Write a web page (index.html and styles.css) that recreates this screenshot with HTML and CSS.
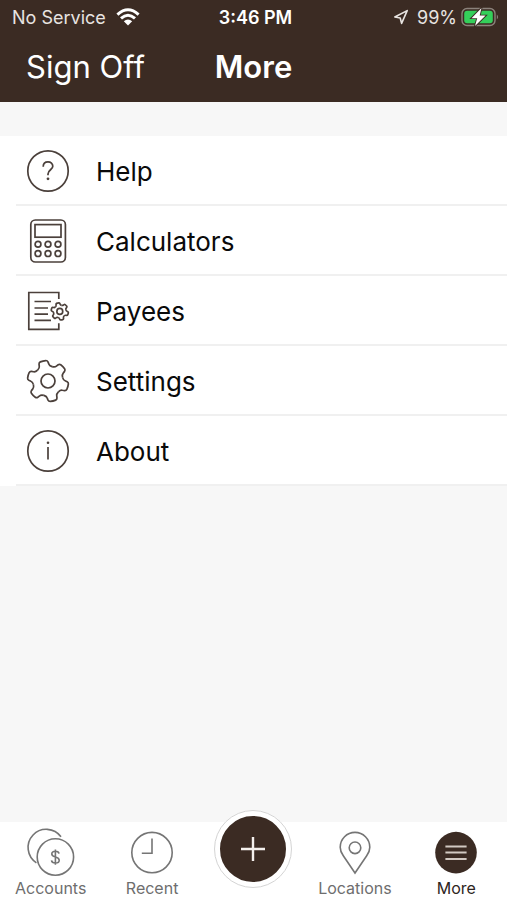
FILE: index.html
```html
<!DOCTYPE html>
<html lang="en">
<head>
<meta charset="utf-8">
<meta name="viewport" content="width=device-width, initial-scale=1">
<title>More</title>
<link rel="stylesheet" href="styles.css">
</head>
<body>
<svg class="defs" width="0" height="0" aria-hidden="true">
  <defs>
    <path id="tooth" d="M-7.5-13C-6-13.9-5-14.6-4.9-16.4L-4.6-18.6Q-4.3-20.1-2.8-20.4Q0-20.9 2.8-20.4Q4.3-20.1 4.6-18.6L4.9-16.4C5-14.6 6-13.9 7.5-13"/>
    <g id="gear">
      <use href="#tooth" transform="rotate(-14)"/>
      <use href="#tooth" transform="rotate(46)"/>
      <use href="#tooth" transform="rotate(106)"/>
      <use href="#tooth" transform="rotate(166)"/>
      <use href="#tooth" transform="rotate(226)"/>
      <use href="#tooth" transform="rotate(286)"/>
      <circle r="7"/>
    </g>
  </defs>
</svg>
<header class="top">
  <div class="status">
    <div class="status-left">
      <span>No Service</span>
      <svg width="24" height="18" viewBox="0 0 24 18" aria-hidden="true">
        <g fill="none" stroke="#fff" stroke-width="3">
          <path d="M1.4 6.6Q12-3 22.6 6.6"/>
          <path d="M5 10.4Q12 4 19 10.4"/>
        </g>
        <path d="M7.8 13.2Q12 9.6 16.2 13.2L12 17.5Z" fill="#fff"/>
      </svg>
    </div>
    <time class="clock">3:46 PM</time>
    <div class="status-right">
      <svg class="arrow" width="16" height="16" viewBox="0 0 16 16" aria-hidden="true">
        <path d="M14.2 1.6L1.8 8L7.2 9L8.6 14.4Z" fill="none" stroke="#e8e4e1" stroke-width="1.6" stroke-linejoin="round"/>
      </svg>
      <span>99%</span>
      <svg width="38" height="20" viewBox="0 0 38 20" aria-hidden="true">
        <rect x="1" y="1.5" width="33" height="17" rx="5" fill="none" stroke="#8b827b" stroke-width="1.4"/>
        <rect x="3.2" y="3.7" width="28.6" height="12.6" rx="3" fill="#34cf5a"/>
        <path d="M35.8 7.5Q38.4 10 35.8 12.5Z" fill="#8b827b"/>
        <path d="M20.5 1L10.5 11.2H16.2L14 19L24.6 8.6H18.7Z" fill="#fff" stroke="#3b2b23" stroke-width="1.8" paint-order="stroke"/>
      </svg>
    </div>
  </div>
  <div class="nav">
    <button class="sign-off" type="button">Sign Off</button>
    <h1 class="title">More</h1>
  </div>
</header>
<main class="content">
  <ul class="menu">
    <li><a class="row" href="#help">
      <svg class="icon" viewBox="-22 -22 44 44" aria-hidden="true">
        <circle r="20.2"/>
        <path d="M-4.8-4.2C-4.8-7.4-2.8-9.2 0-9.2C2.8-9.2 4.8-7.4 4.8-4.8C4.8-1.4 0-1 0 3V4.2"/>
        <circle class="dot" cy="7.8" r="1.4"/>
      </svg>
      <span class="row-label">Help</span></a></li>
    <li><a class="row" href="#calculators">
      <svg class="icon" viewBox="-22 -22 44 44" aria-hidden="true">
        <rect x="-17.2" y="-21" width="34.6" height="42" rx="4.5"/>
        <rect x="-13" y="-16.4" width="26" height="12.6"/>
        <circle cx="-10" cy="3.2" r="2.9"/><circle cy="3.2" r="2.9"/><circle cx="10" cy="3.2" r="2.9"/>
        <circle cx="-10" cy="12.6" r="2.9"/><circle cy="12.6" r="2.9"/><circle cx="10" cy="12.6" r="2.9"/>
      </svg>
      <span class="row-label">Calculators</span></a></li>
    <li><a class="row" href="#payees">
      <svg class="icon" viewBox="-22 -22 44 44" aria-hidden="true">
        <path d="M10.8-12V-18.5H-19.2V18.4H10.8V12.2M-13.5-9.5H3M-13.5-3H0M-13.5 3.2H0M-13.5 9.4H3"/>
        <g class="mini-gear" transform="translate(11.8 .4) scale(.42)"><use href="#gear"/></g>
      </svg>
      <span class="row-label">Payees</span></a></li>
    <li><a class="row" href="#settings">
      <svg class="icon" viewBox="-22 -22 44 44" aria-hidden="true"><use href="#gear"/></svg>
      <span class="row-label">Settings</span></a></li>
    <li><a class="row" href="#about">
      <svg class="icon" viewBox="-22 -22 44 44" aria-hidden="true">
        <circle r="20.2"/>
        <path d="M0-4V8.6"/>
        <circle class="dot" cy="-8.2" r="1.3"/>
      </svg>
      <span class="row-label">About</span></a></li>
  </ul>
</main>
<nav class="tabs" aria-label="Main">
  <a class="tab" href="#accounts">
    <svg class="tab-icon" viewBox="0 0 48 44" aria-hidden="true">
      <path d="M9.4 32.8A18.2 18.2 0 1 1 34 6.8"/>
      <circle cx="28.4" cy="27" r="18.2"/>
      <path d="M32 23.6C31.8 21.8 30.4 21.2 28.4 21.2C26.3 21.2 24.8 22.2 24.8 24C24.8 28 32.2 26 32.2 30.2C32.2 32 30.6 33 28.4 33C26.2 33 24.7 32.2 24.5 30.4M28.4 19.4V34.8"/>
    </svg>
    <span>Accounts</span></a>
  <a class="tab" href="#recent">
    <svg class="tab-icon" viewBox="0 0 48 44" aria-hidden="true">
      <circle cx="24" cy="22.6" r="20.2"/>
      <path d="M24 8.5V23.2H13.8"/>
    </svg>
    <span>Recent</span></a>
  <div class="tab-add">
    <button class="add" type="button" aria-label="Add">
      <svg width="26" height="26" viewBox="0 0 26 26" aria-hidden="true"><path d="M13 1V25M1 13H25" stroke="#f4f0ed" stroke-width="2.4"/></svg>
    </button>
  </div>
  <a class="tab" href="#locations">
    <svg class="tab-icon" viewBox="0 0 48 44" aria-hidden="true">
      <path d="M24 43L12.3 25.8C10.2 22.8 9.2 20.2 9.2 17.2A14.8 14.8 0 0 1 38.8 17.2C38.8 20.2 37.8 22.8 35.7 25.8Z"/>
      <circle cx="24" cy="17.8" r="5.8"/>
    </svg>
    <span>Locations</span></a>
  <a class="tab current" href="#more" aria-current="page">
    <svg class="tab-icon" viewBox="0 0 48 44" aria-hidden="true">
      <circle class="disc" cx="24" cy="22.6" r="20.8"/>
      <path class="bars" d="M13.4 16.4H34.6M13.4 22.6H34.6M13.4 29H34.6"/>
    </svg>
    <span>More</span></a>
</nav>
</body>
</html>
```
FILE: styles.css
```css
* {
  box-sizing: border-box;
}

body {
  margin: 0;
  min-height: 100vh;
  display: flex;
  flex-direction: column;
  background: #f7f7f7;
  color: #0a0a0a;
  font-family: Inter, "Liberation Sans", sans-serif;
}

a {
  color: inherit;
  text-decoration: none;
}

button {
  font: inherit;
  border: 0;
  padding: 0;
  cursor: pointer;
}

svg {
  display: block;
  flex: none;
}

.defs {
  position: absolute;
}

.top {
  background: #3b2b23;
  color: #fff;
  padding-bottom: 4px;
}

.status {
  display: grid;
  grid-template-columns: 1fr auto 1fr;
  align-items: center;
  height: 34px;
  padding: 0 8px 0 12px;
  font-size: 18px;
  color: #e8e4e1;
}

.status-left,
.status-right {
  display: flex;
  align-items: center;
  gap: 10px;
}

.status-right {
  justify-content: flex-end;
  gap: 4px;
}

.arrow {
  margin-right: 4px;
}

.clock {
  font-weight: 600;
  color: #fff;
}

.nav {
  display: grid;
  grid-template-columns: 1fr auto 1fr;
  align-items: center;
  height: 64px;
  padding: 0 26px;
  font-size: 31px;
}

.sign-off {
  justify-self: start;
  background: none;
  color: #fff;
}

.title {
  margin: 0;
  font-size: 31px;
  font-weight: 600;
}

.content {
  flex: 1;
  padding-top: 34px;
}

.menu {
  margin: 0;
  padding: 0 0 0 16px;
  list-style: none;
  background: #fff;
}

.row {
  display: flex;
  align-items: center;
  gap: 26px;
  height: 70px;
  padding: 2px 10px 0;
  border-bottom: 2px solid #f0f0f0;
}

.row-label {
  font-size: 26px;
}

.icon {
  width: 44px;
  height: 44px;
  fill: none;
  stroke: #4b403b;
  stroke-width: 1.7;
}

.icon .dot {
  fill: #4b403b;
  stroke: none;
}

.mini-gear {
  stroke-width: 4;
}

.tabs {
  display: grid;
  grid-template-columns: repeat(5, 1fr);
  height: 78px;
  background: #fff;
}

.tab {
  display: flex;
  flex-direction: column;
  align-items: center;
  gap: 4px;
  padding-top: 8px;
  font-size: 16px;
  line-height: 20px;
  color: #6e6e6e;
}

.tab-icon {
  width: 48px;
  height: 44px;
  overflow: visible;
  fill: none;
  stroke: #757575;
  stroke-width: 1.6;
}

.current {
  color: #2e2521;
}

.tab-icon .disc {
  fill: #3b2b23;
  stroke: none;
}

.tab-icon .bars {
  stroke: #d2c9c2;
  stroke-width: 2;
}

.tab-add {
  display: flex;
  justify-content: center;
  align-items: flex-start;
}

.add {
  display: flex;
  align-items: center;
  justify-content: center;
  width: 78px;
  height: 78px;
  margin-top: -12px;
  border: 6px solid #fff;
  border-radius: 50%;
  background: #3b2b23;
  outline: 1px solid #d4d4d4;
  outline-offset: -1px;
}
```
